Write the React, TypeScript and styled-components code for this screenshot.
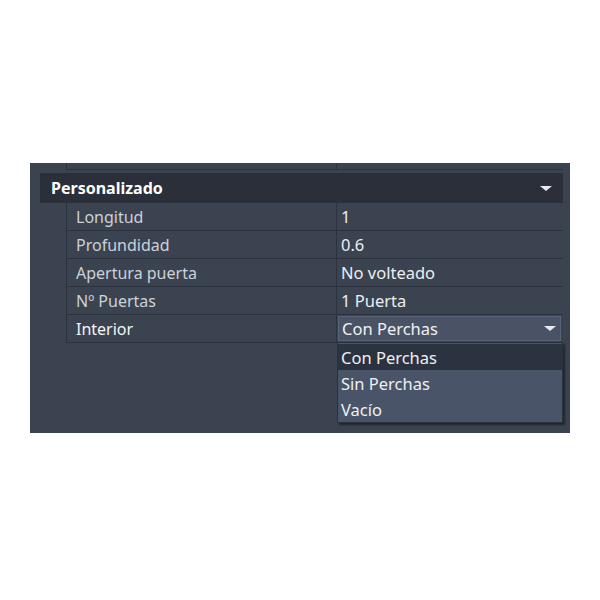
import React from 'react';
import styled, { createGlobalStyle } from 'styled-components';

const GlobalStyle = createGlobalStyle`
  html, body {
    margin: 0;
    padding: 0;
    background: #ffffff;
  }
  body {
    font-family: "Noto Sans", "Open Sans", sans-serif;
  }
`;

const Page = styled.div`
  width: 600px;
  height: 600px;
  padding: 163px 0 0 30px;
  box-sizing: border-box;
`;

const Panel = styled.div`
  width: 540px;
  height: 270px;
  background: #3b4351;
  box-sizing: border-box;
  padding-right: 7px;
  display: flex;
  flex-direction: column;
`;

const CutRow = styled.div`
  margin-left: 36px;
  height: 6px;
  display: grid;
  grid-template-columns: 270px 1fr;
  border-bottom: 1px solid #2d333e;

  div {
    border-left: 1px solid #2d333e;
  }
`;

const Section = styled.div`
  margin: 3px 0 0 10px;
  display: flex;
  flex-direction: column;
`;

const Header = styled.div`
  height: 30px;
  background: #2a2f3a;
  display: flex;
  align-items: center;
  justify-content: space-between;
  padding: 0 11px;
  color: #ffffff;
  font-weight: 700;
  font-size: 16px;
`;

const Caret = styled.span<{ $size?: number }>`
  width: 0;
  height: 0;
  border-left: ${(p) => (p.$size ?? 6)}px solid transparent;
  border-right: ${(p) => (p.$size ?? 6)}px solid transparent;
  border-top: ${(p) => (p.$size ?? 6) - 0.5}px solid #e8eaee;
`;

const Rows = styled.div`
  margin-left: 26px;
  display: flex;
  flex-direction: column;
`;

const Row = styled.div`
  display: grid;
  grid-template-columns: 270px 1fr;
  height: 28px;
  box-sizing: border-box;
  border-bottom: 1px solid #2d333e;
  font-size: 16px;
`;

const Label = styled.div<{ $active?: boolean }>`
  border-left: 1px solid #2d333e;
  padding-left: 9px;
  display: flex;
  align-items: center;
  color: ${(p) => (p.$active ? '#f4f5f7' : '#cdd1d8')};
`;

const Value = styled.div`
  position: relative;
  border-left: 1px solid #2d333e;
  padding-left: 4px;
  display: flex;
  align-items: center;
  color: #eceef1;
  font-size: 16.5px;
`;

const Select = styled.div`
  position: absolute;
  left: 1px;
  right: 2px;
  top: 1px;
  bottom: 1px;
  background: #4a5366;
  border: 1px solid #596377;
  display: flex;
  align-items: center;
  justify-content: space-between;
  padding: 0 4px 0 3px;
  color: #f0f1f4;
`;

const Menu = styled.div`
  position: absolute;
  left: 0;
  right: 0;
  top: 27px;
  background: #4a5468;
  border: 1px solid #2b313c;
  box-shadow: 2px 2px 2px rgba(0, 0, 0, 0.45);
  padding-top: 1px;
  z-index: 2;
`;

const Option = styled.div<{ $selected?: boolean }>`
  height: 26px;
  display: flex;
  align-items: center;
  padding-left: 3px;
  background: ${(p) => (p.$selected ? '#2c3340' : 'transparent')};
  color: #eef0f3;
  font-size: 16.5px;
`;

const props = [
  { label: 'Longitud', value: '1' },
  { label: 'Profundidad', value: '0.6' },
  { label: 'Apertura puerta', value: 'No volteado' },
  { label: 'Nº Puertas', value: '1 Puerta' },
];

const options = ['Con Perchas', 'Sin Perchas', 'Vacío'];

const App = () => {
  return (
    <>
      <GlobalStyle />
      <Page>
        <Panel>
          <CutRow>
            <div />
            <div />
          </CutRow>
          <Section>
            <Header>
              Personalizado
              <Caret />
            </Header>
            <Rows>
              {props.map((p) => (
                <Row key={p.label}>
                  <Label>{p.label}</Label>
                  <Value>{p.value}</Value>
                </Row>
              ))}
              <Row>
                <Label $active>Interior</Label>
                <Value>
                  <Select>
                    Con Perchas
                    <Caret />
                  </Select>
                  <Menu>
                    {options.map((o, i) => (
                      <Option key={o} $selected={i === 0}>
                        {o}
                      </Option>
                    ))}
                  </Menu>
                </Value>
              </Row>
            </Rows>
          </Section>
        </Panel>
      </Page>
    </>
  );
};

export default App;
